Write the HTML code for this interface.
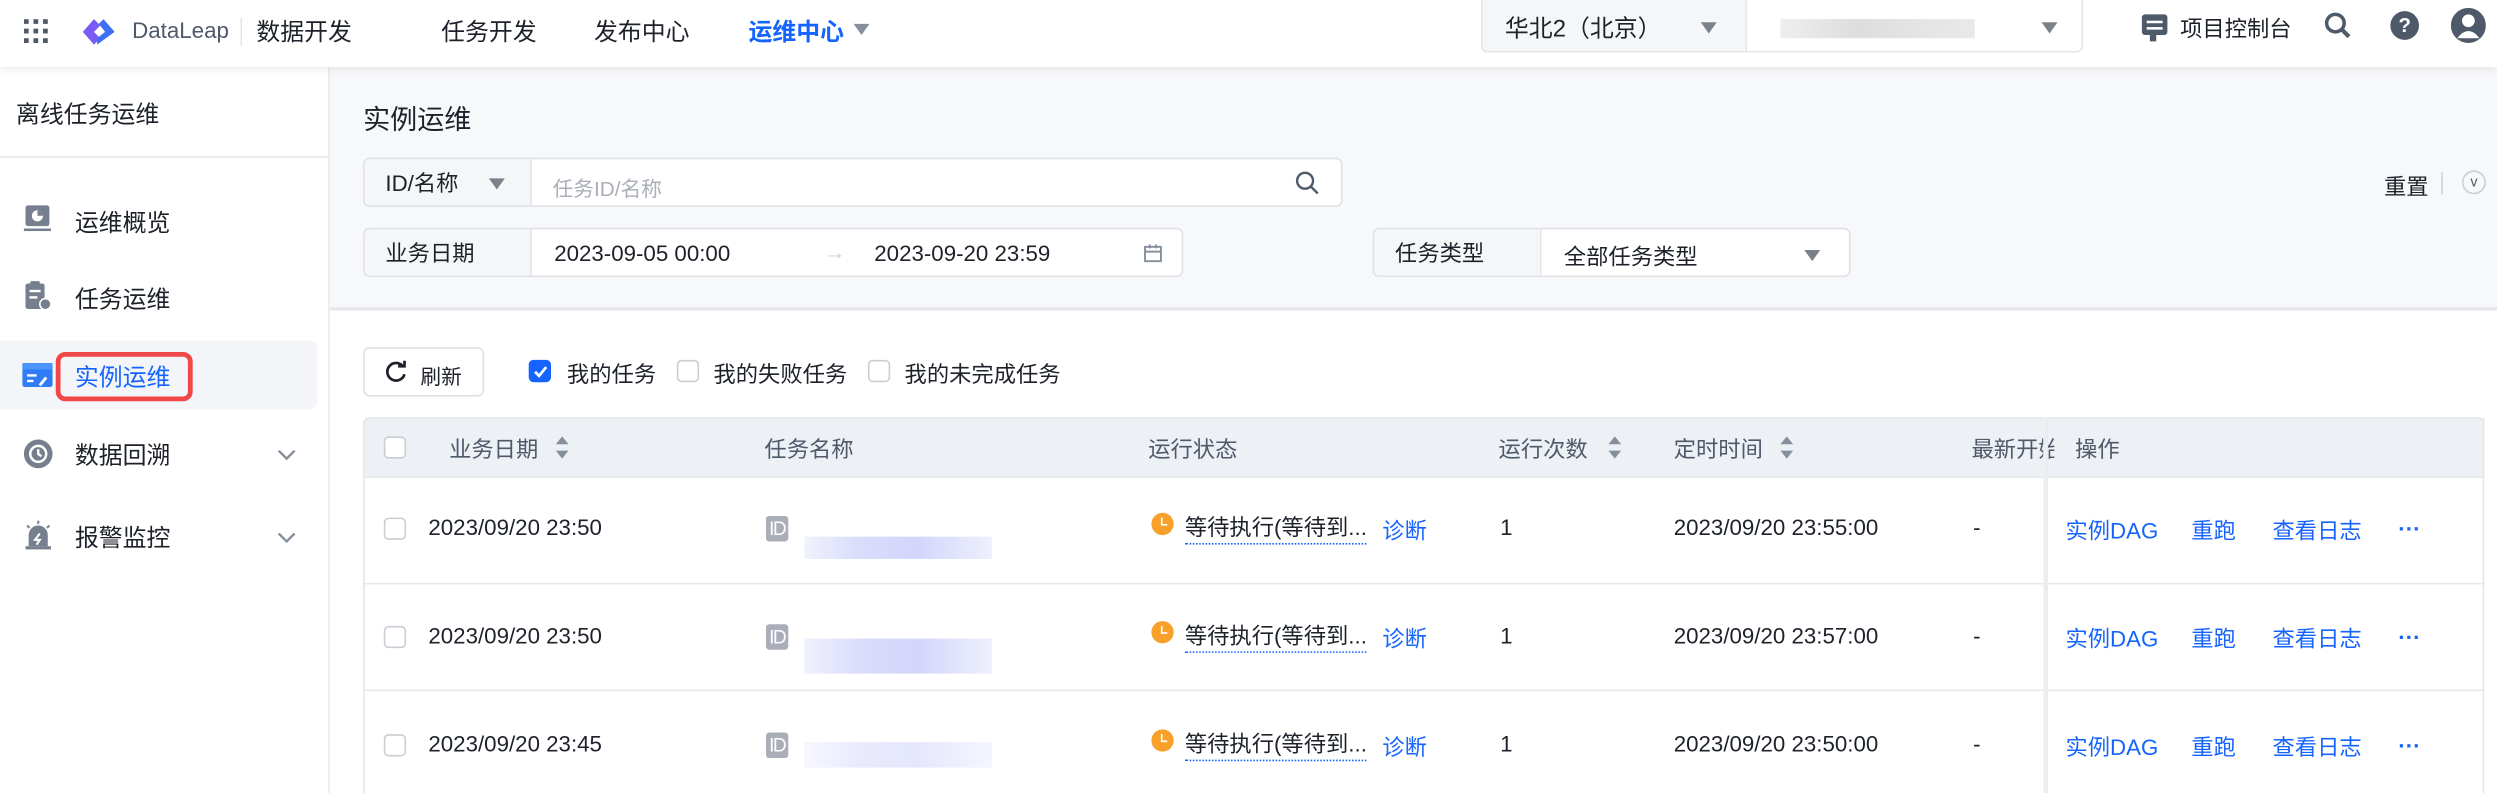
<!DOCTYPE html>
<html><head><meta charset="utf-8"><style>
*{box-sizing:border-box;margin:0;padding:0}
html,body{width:2497px;height:793px;overflow:hidden;background:#fff}
#w{position:absolute;left:0;top:0;width:1568px;height:498px;transform:scale(1.5925);transform-origin:0 0;font-family:"Liberation Sans","Noto Sans CJK SC",sans-serif;font-size:14px;color:#1d2129;overflow:hidden;background:#fff}
.a{position:absolute;white-space:nowrap}
.top{position:absolute;left:0;top:0;width:1568px;height:42px;background:#fff;box-shadow:0 2px 5px rgba(0,0,0,.07);z-index:5}
.side{position:absolute;left:0;top:42px;width:207px;height:456px;background:#fff;border-right:1px solid #e8eaed}
.main{position:absolute;left:207px;top:42px;width:1361px;height:153px;background:#f7f8fa;border-bottom:2px solid #e5e6eb}
.box{position:absolute;border:1px solid #dfe1e6;border-radius:4px;background:#fff;overflow:hidden}
.lab{position:absolute;left:0;top:0;bottom:0;background:#f5f6f8;border-right:1px solid #e5e6eb;padding-left:13px;line-height:31px}
.tri{position:absolute;width:0;height:0;border-left:5px solid transparent;border-right:5px solid transparent;border-top:7px solid #7b818a}
.cb{position:absolute;width:14px;height:14px;border:1px solid #c9cdd4;border-radius:3px;background:#fff}
.blue{color:#1664ff}
.sort{position:absolute;width:8px;height:14px}
.sort:before{content:"";position:absolute;top:0;left:0;border-left:4px solid transparent;border-right:4px solid transparent;border-bottom:5px solid #86909c}
.sort:after{content:"";position:absolute;bottom:0;left:0;border-left:4px solid transparent;border-right:4px solid transparent;border-top:5px solid #86909c}
.row{position:absolute;left:228px;width:1332px;border-bottom:1px solid #e5e6eb}
.clk{position:absolute;width:14px;height:14px;border-radius:50%;background:#f7a02a}
.clk:after{content:"";position:absolute;left:6px;top:3px;width:3px;height:4px;border-left:1.5px solid #fff;border-bottom:1.5px solid #fff}
.idt{position:absolute;width:14px;height:16px;background:#a9aeb8;border-radius:2px;color:#fff;font-size:12px;line-height:16px;text-align:center;letter-spacing:-1px}
.blur{position:absolute;background:linear-gradient(90deg,#f1f2fd,#d9dcfb 30%,#d3d6fb 60%,#eef0fd)}
.dots{position:absolute;font-weight:bold;color:#1664ff;font-size:14px}
</style></head><body><div id="w">
<div class="top">
 <svg class="a" style="left:15px;top:12px" width="16" height="16"><g fill="#4e5969"><rect x="0" y="0" width="3" height="3"/><rect x="6" y="0" width="3" height="3"/><rect x="12" y="0" width="3" height="3"/><rect x="0" y="6" width="3" height="3"/><rect x="6" y="6" width="3" height="3"/><rect x="12" y="6" width="3" height="3"/><rect x="0" y="12" width="3" height="3"/><rect x="6" y="12" width="3" height="3"/><rect x="12" y="12" width="3" height="3"/></g></svg>
 <svg class="a" style="left:50px;top:10px" width="24" height="20"><path d="M2 10 L9 2 L13 6 L9 10 L13 14 L9 18Z" fill="#7a5cf5"/><path d="M11 18 L22 10 L15 2 L12 5 L16 10 L11 14Z" fill="#3f6ff5"/></svg>
 <div class="a" style="left:83px;top:11px;font-size:14px;color:#4e5969">DataLeap</div>
 <div class="a" style="left:151px;top:11px;width:1px;height:18px;background:#e5e6eb"></div>
 <div class="a" style="left:161px;top:9px;font-size:15px">数据开发</div>
 <div class="a" style="left:277px;top:9px;font-size:15px">任务开发</div>
 <div class="a" style="left:373px;top:9px;font-size:15px">发布中心</div>
 <div class="a blue" style="left:470px;top:9px;font-size:15px;font-weight:bold">运维中心</div>
 <div class="tri" style="left:536px;top:15px;border-top-color:#86909c"></div>
 <div class="a" style="left:930px;top:0;width:378px;height:33px;border:1px solid #e5e6eb;border-top:none;border-radius:0 0 4px 4px;background:#fff"></div>
 <div class="a" style="left:930px;top:0;width:167px;height:33px;background:#f5f6f8;border:1px solid #e5e6eb;border-top:none;border-radius:0 0 0 4px"></div>
 <div class="a" style="left:945px;top:7px;font-size:15px;color:#1d2129">华北2（北京）</div>
 <div class="tri" style="left:1068px;top:14px"></div>
 <div class="a" style="left:1118px;top:12px;width:122px;height:12px;background:linear-gradient(90deg,#eee,#ddd 40%,#e4e4e4 70%,#e9e9e9)"></div>
 <div class="tri" style="left:1282px;top:14px"></div>
 <svg class="a" style="left:1344px;top:8px" width="19" height="19"><rect x="1" y="1" width="16" height="13" rx="2" fill="#4e5969"/><rect x="6" y="14" width="4" height="4" fill="#4e5969"/><rect x="4" y="5" width="10" height="1.6" fill="#fff"/><rect x="4" y="9" width="10" height="1.6" fill="#fff"/></svg>
 <div class="a" style="left:1369px;top:8px;font-size:14px">项目控制台</div>
 <svg class="a" style="left:1459px;top:7px" width="18" height="18"><circle cx="7.5" cy="7.5" r="5.5" fill="none" stroke="#4e5969" stroke-width="2.2"/><path d="M11.5 11.5 L16 16" stroke="#4e5969" stroke-width="2.6"/></svg>
 <div class="a" style="left:1501px;top:7px;width:18px;height:18px;border-radius:50%;background:#4e5969;color:#fff;font-size:13px;font-weight:bold;text-align:center;line-height:18px">?</div>
 <svg class="a" style="left:1539px;top:5px" width="22" height="22"><circle cx="11" cy="11" r="11" fill="#4e5969"/><circle cx="11" cy="8" r="4" fill="#fff"/><path d="M4 19 Q11 10 18 19Z" fill="#fff"/></svg>
</div>

<div class="side">
 <div class="a" style="left:10px;top:19px;font-size:15px">离线任务运维</div>
 <div class="a" style="left:0;top:56px;width:206px;height:1px;background:#e8eaed"></div>
 <svg class="a" style="left:14px;top:86px" width="20" height="20"><rect x="2" y="1" width="15" height="13" rx="1.5" fill="#767f8d"/><rect x="1" y="15.5" width="17" height="1.6" fill="#767f8d"/><circle cx="9.5" cy="7.5" r="3.5" fill="#fff"/><path d="M9.5 7.5 V4 A3.5 3.5 0 0 1 13 7.5Z" fill="#767f8d"/></svg>
 <div class="a" style="left:47px;top:87px;font-size:15px">运维概览</div>
 <svg class="a" style="left:14px;top:134px" width="20" height="20"><rect x="2" y="2" width="12" height="16" rx="1.5" fill="#767f8d"/><rect x="5" y="0.5" width="6" height="3" rx="1" fill="#767f8d"/><rect x="4.5" y="6" width="7" height="1.5" fill="#fff"/><rect x="4.5" y="10" width="5" height="1.5" fill="#fff"/><circle cx="14.5" cy="15" r="3.5" fill="#767f8d" stroke="#fff" stroke-width="1"/></svg>
 <div class="a" style="left:47px;top:135px;font-size:15px">任务运维</div>
 <div class="a" style="left:0;top:172px;width:199px;height:43px;background:#f3f5f8;border-radius:0 4px 4px 0"></div>
 <svg class="a" style="left:14px;top:185px" width="20" height="18"><rect x="0" y="1" width="19" height="15" rx="1.5" fill="#2f7cf6"/><rect x="0" y="1" width="19" height="4" fill="#4b95ff"/><rect x="3" y="8" width="6" height="1.5" fill="#fff"/><rect x="3" y="11.5" width="4" height="1.5" fill="#fff"/><path d="M11 15 L15 10" stroke="#fff" stroke-width="1.8"/></svg>
 <div class="a" style="left:35px;top:179px;width:86px;height:31px;border:3px solid #f04848;border-radius:6px"></div>
 <div class="a blue" style="left:47px;top:184px;font-size:15px">实例运维</div>
 <svg class="a" style="left:14px;top:233px" width="20" height="20"><circle cx="10" cy="10" r="9" fill="#767f8d"/><circle cx="10" cy="10" r="5" fill="none" stroke="#fff" stroke-width="1.6"/><path d="M10 7 V10 L12 11.5" stroke="#fff" stroke-width="1.5" fill="none"/></svg>
 <div class="a" style="left:47px;top:233px;font-size:15px">数据回溯</div>
 <svg class="a" style="left:173px;top:239px" width="14" height="10"><path d="M2 2 L7 7 L12 2" fill="none" stroke="#86909c" stroke-width="1.5"/></svg>
 <svg class="a" style="left:14px;top:284px" width="20" height="20"><path d="M4 17 V10 A6 6 0 0 1 16 10 V17Z" fill="#767f8d"/><rect x="2" y="17" width="16" height="2" fill="#767f8d"/><path d="M11 9 L8 13 H11 L9 16" stroke="#fff" stroke-width="1.3" fill="none"/><path d="M10 1 V3 M3 4 L4.5 5.5 M17 4 L15.5 5.5" stroke="#767f8d" stroke-width="1.3"/></svg>
 <div class="a" style="left:47px;top:285px;font-size:15px">报警监控</div>
 <svg class="a" style="left:173px;top:291px" width="14" height="10"><path d="M2 2 L7 7 L12 2" fill="none" stroke="#86909c" stroke-width="1.5"/></svg>
</div>

<div class="main"></div>
<div class="a" style="left:228px;top:61px;font-size:17px">实例运维</div>
<div class="box" style="left:228px;top:99px;width:615px;height:31px">
 <div class="lab" style="width:105px">ID/名称</div>
 <div class="tri" style="left:78px;top:12px"></div>
 <div class="a" style="left:118px;top:8px;font-size:13px;color:#a9aeb8">任务ID/名称</div>
 <svg class="a" style="left:584px;top:7px" width="16" height="16"><circle cx="6.5" cy="6.5" r="5" fill="none" stroke="#4e5969" stroke-width="1.5"/><path d="M10 10 L14.5 14.5" stroke="#4e5969" stroke-width="1.5"/></svg>
</div>
<div class="box" style="left:228px;top:143px;width:515px;height:31px">
 <div class="lab" style="width:105px">业务日期</div>
 <div class="a" style="left:119px;top:7px">2023-09-05 00:00</div>
 <div class="a" style="left:288px;top:6px;color:#c9cdd4">→</div>
 <div class="a" style="left:320px;top:7px">2023-09-20 23:59</div>
 <svg class="a" style="left:489px;top:9px" width="12" height="12"><rect x="1" y="2" width="10" height="9" fill="none" stroke="#86909c" stroke-width="1.2"/><path d="M1 5 H11 M4 0.5 V3 M8 0.5 V3" stroke="#86909c" stroke-width="1.2"/></svg>
</div>
<div class="box" style="left:862px;top:143px;width:300px;height:31px">
 <div class="lab" style="width:105px">任务类型</div>
 <div class="a" style="left:119px;top:7px">全部任务类型</div>
 <div class="tri" style="left:270px;top:13px"></div>
</div>
<div class="a" style="left:1497px;top:107px;font-size:14px">重置</div>
<div class="a" style="left:1533px;top:108px;width:1px;height:14px;background:#d0d3d9"></div>
<div class="a" style="left:1546px;top:107px;width:15px;height:15px;border:1px solid #c9cdd4;border-radius:50%;font-size:9px;text-align:center;line-height:12px;color:#4e5969">v</div>

<div class="a" style="left:228px;top:218px;width:76px;height:31px;border:1px solid #dfe1e6;border-radius:4px;background:#fff"></div>
<svg class="a" style="left:241px;top:226px" width="15" height="15"><path d="M12 4 A5.5 5.5 0 1 0 13 9" fill="none" stroke="#1d2129" stroke-width="1.7"/><path d="M9 4 H13 V0.5" fill="none" stroke="#1d2129" stroke-width="1.7"/></svg>
<div class="a" style="left:264px;top:226px;font-size:13px">刷新</div>
<div class="cb" style="left:332px;top:226px;background:#1664ff;border-color:#1664ff"></div>
<svg class="a" style="left:334px;top:228px" width="11" height="11"><path d="M2 5.5 L4.5 8 L9 2.5" fill="none" stroke="#fff" stroke-width="1.7"/></svg>
<div class="a" style="left:356px;top:225px">我的任务</div>
<div class="cb" style="left:425px;top:226px"></div>
<div class="a" style="left:448px;top:225px">我的失败任务</div>
<div class="cb" style="left:545px;top:226px"></div>
<div class="a" style="left:568px;top:225px">我的未完成任务</div>

<div class="a" style="left:228px;top:262px;width:1332px;height:38px;background:#edf0f4;border:1px solid #e5e6eb;border-radius:4px 4px 0 0"></div>
<div class="cb" style="left:241px;top:274px"></div>
<div class="a" style="left:282px;top:272px;color:#4e5969">业务日期</div><div class="sort" style="left:349px;top:274px"></div>
<div class="a" style="left:480px;top:272px;color:#4e5969">任务名称</div>
<div class="a" style="left:721px;top:272px;color:#4e5969">运行状态</div>
<div class="a" style="left:941px;top:272px;color:#4e5969">运行次数</div><div class="sort" style="left:1010px;top:274px"></div>
<div class="a" style="left:1051px;top:272px;color:#4e5969">定时时间</div><div class="sort" style="left:1118px;top:274px"></div>
<div class="a" style="left:1238px;top:272px;color:#4e5969;width:52px;overflow:hidden">最新开始</div>
<div class="a" style="left:1303px;top:272px;color:#4e5969">操作</div>

<div class="row" style="top:300px;height:67px"></div>
<div class="row" style="top:367px;height:67px"></div>
<div class="a" style="left:228px;top:300px;width:1px;height:198px;background:#e5e6eb"></div>
<div class="a" style="left:1283px;top:262px;width:3px;height:236px;background:linear-gradient(90deg,#f0f1f3,#e9ebee)"></div>
<div class="a" style="left:1559px;top:262px;width:1px;height:236px;background:#e5e6eb"></div>

<div class="cb" style="left:241px;top:325px"></div>
<div class="a" style="left:269px;top:323px">2023/09/20 23:50</div>
<div class="idt" style="left:481px;top:324px">ID</div>
<div class="blur" style="left:505px;top:337px;width:118px;height:14px"></div>
<div class="clk" style="left:723px;top:322px"></div>
<div class="a" style="left:744px;top:321px;border-bottom:1px dotted #1664ff">等待执行(等待到...</div>
<div class="a blue" style="left:868px;top:323px">诊断</div>
<div class="a" style="left:942px;top:323px">1</div>
<div class="a" style="left:1051px;top:323px">2023/09/20 23:55:00</div>
<div class="a" style="left:1239px;top:323px">-</div>
<div class="a blue" style="left:1297px;top:323px">实例DAG</div><div class="a blue" style="left:1376px;top:323px">重跑</div><div class="a blue" style="left:1427px;top:323px">查看日志</div><div class="dots" style="left:1506px;top:324px">···</div>

<div class="cb" style="left:241px;top:393px"></div>
<div class="a" style="left:269px;top:391px">2023/09/20 23:50</div>
<div class="idt" style="left:481px;top:392px">ID</div>
<div class="blur" style="left:505px;top:401px;width:118px;height:22px"></div>
<div class="clk" style="left:723px;top:390px"></div>
<div class="a" style="left:744px;top:389px;border-bottom:1px dotted #1664ff">等待执行(等待到...</div>
<div class="a blue" style="left:868px;top:391px">诊断</div>
<div class="a" style="left:942px;top:391px">1</div>
<div class="a" style="left:1051px;top:391px">2023/09/20 23:57:00</div>
<div class="a" style="left:1239px;top:391px">-</div>
<div class="a blue" style="left:1297px;top:391px">实例DAG</div><div class="a blue" style="left:1376px;top:391px">重跑</div><div class="a blue" style="left:1427px;top:391px">查看日志</div><div class="dots" style="left:1506px;top:392px">···</div>

<div class="cb" style="left:241px;top:461px"></div>
<div class="a" style="left:269px;top:459px">2023/09/20 23:45</div>
<div class="idt" style="left:481px;top:460px">ID</div>
<div class="blur" style="left:505px;top:466px;width:118px;height:16px;opacity:.6"></div>
<div class="clk" style="left:723px;top:458px"></div>
<div class="a" style="left:744px;top:457px;border-bottom:1px dotted #1664ff">等待执行(等待到...</div>
<div class="a blue" style="left:868px;top:459px">诊断</div>
<div class="a" style="left:942px;top:459px">1</div>
<div class="a" style="left:1051px;top:459px">2023/09/20 23:50:00</div>
<div class="a" style="left:1239px;top:459px">-</div>
<div class="a blue" style="left:1297px;top:459px">实例DAG</div><div class="a blue" style="left:1376px;top:459px">重跑</div><div class="a blue" style="left:1427px;top:459px">查看日志</div><div class="dots" style="left:1506px;top:460px">···</div>
</div></body></html>
